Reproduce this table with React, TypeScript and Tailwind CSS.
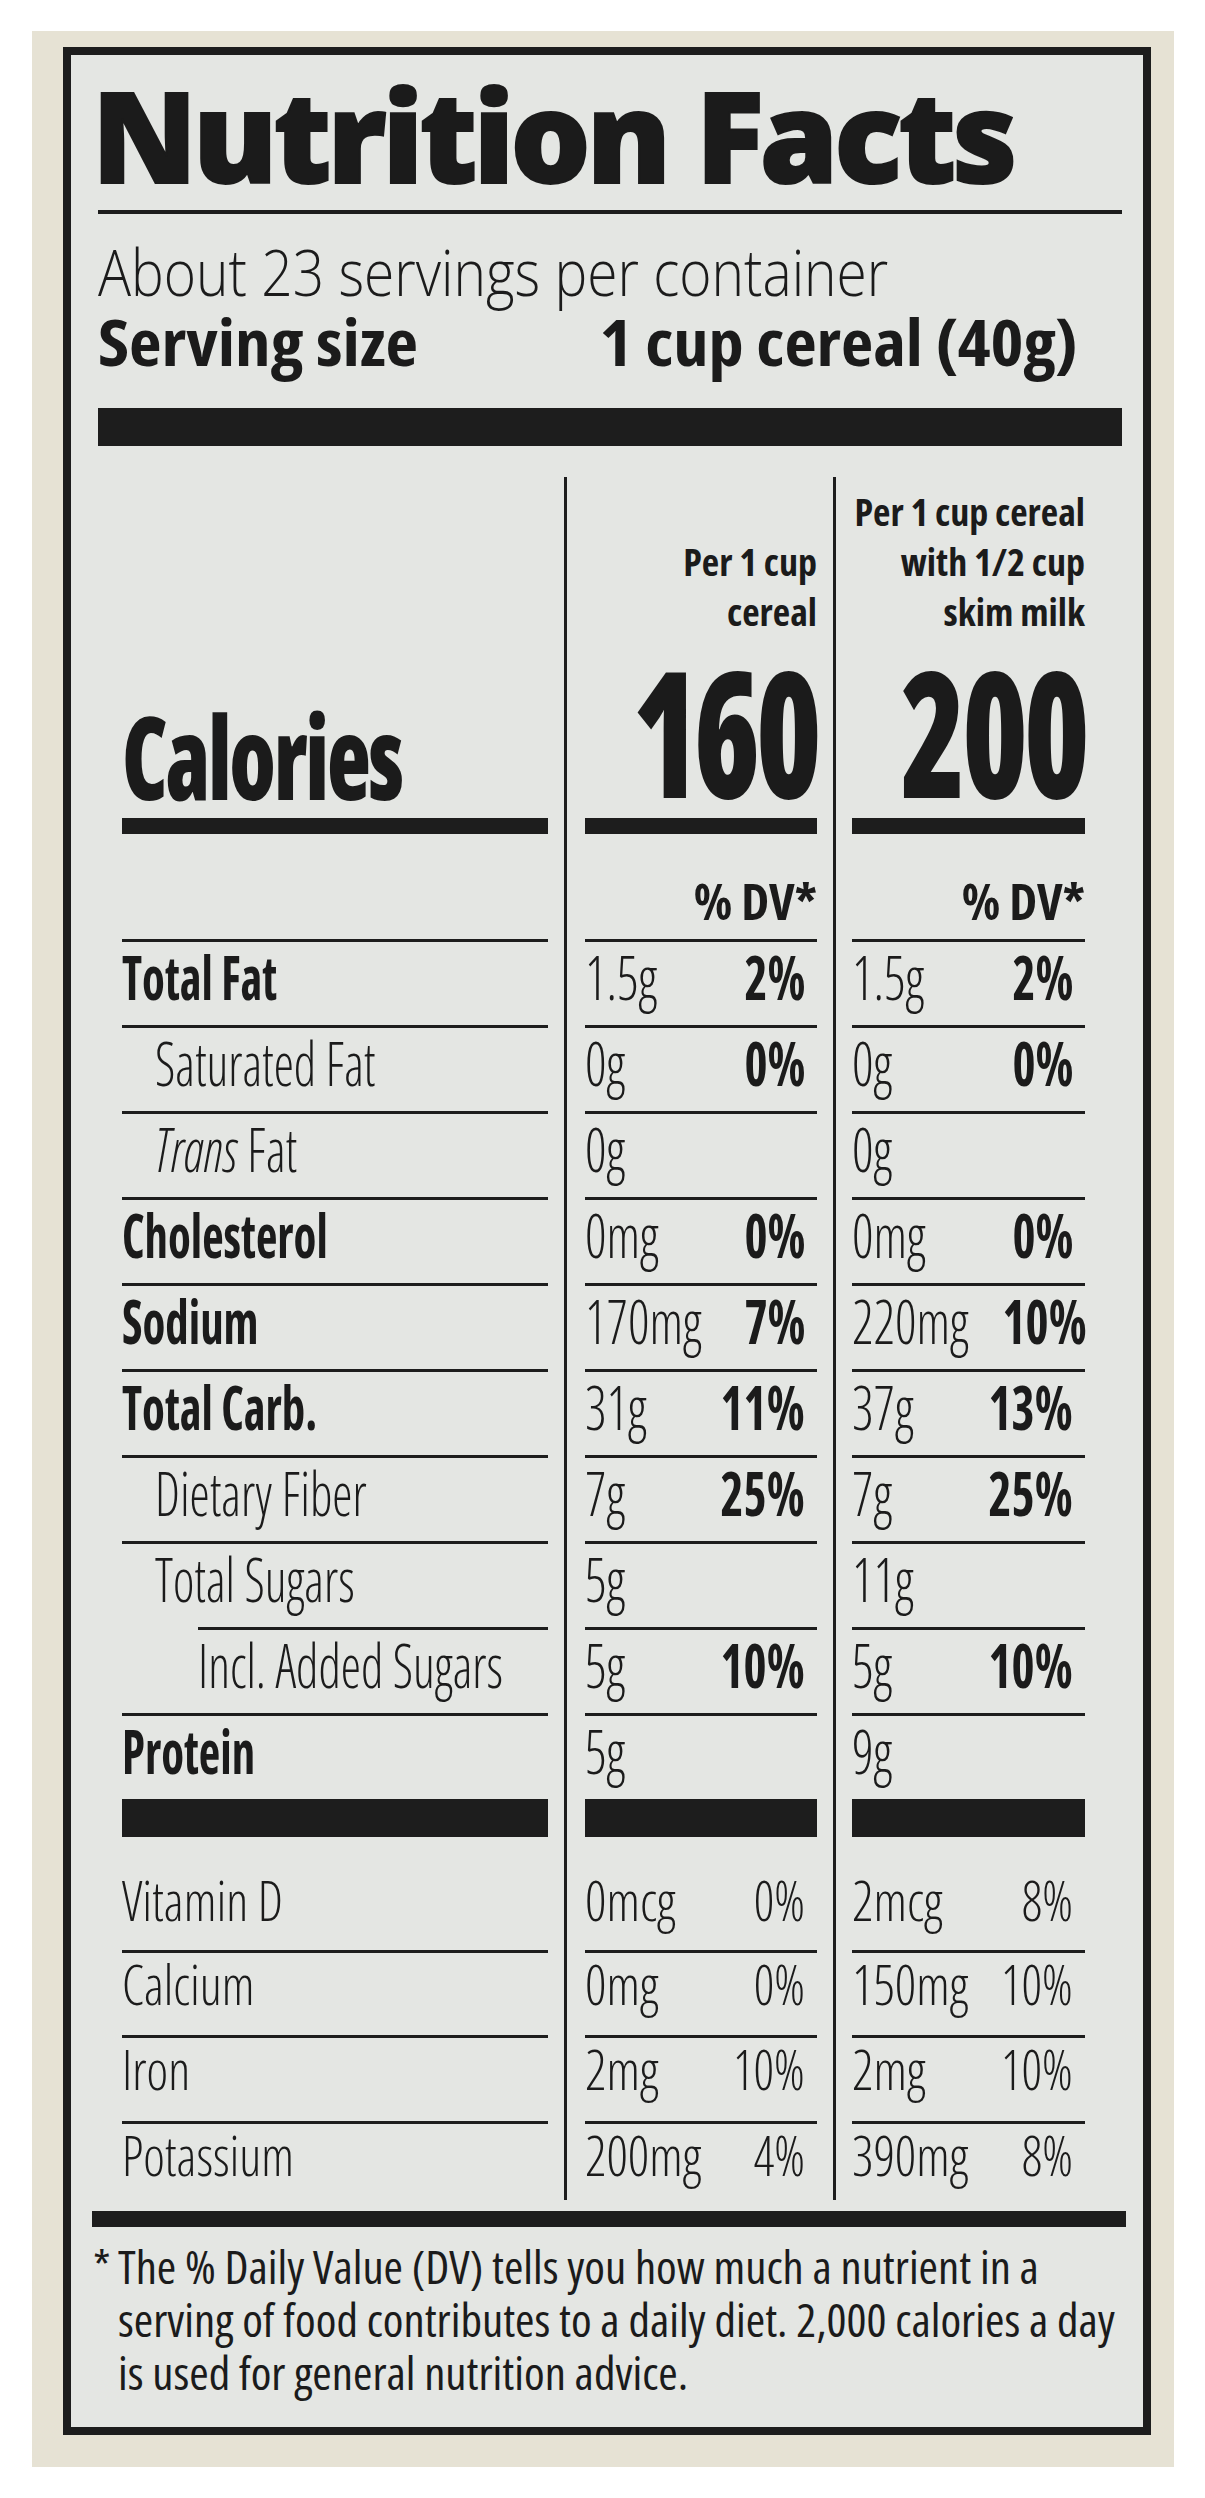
import React from 'react';

type Nutrient = {
  label: string;
  italic?: string;
  weight: 'bold' | 'light';
  indent?: 'sub' | 'subsub';
  a: string[];
  b: string[];
};

const nutrients: Nutrient[] = [
  { label: 'Total Fat', weight: 'bold', a: ['1.5g', '2%'], b: ['1.5g', '2%'] },
  { label: 'Saturated Fat', weight: 'light', indent: 'sub', a: ['0g', '0%'], b: ['0g', '0%'] },
  { label: ' Fat', italic: 'Trans', weight: 'light', indent: 'sub', a: ['0g'], b: ['0g'] },
  { label: 'Cholesterol', weight: 'bold', a: ['0mg', '0%'], b: ['0mg', '0%'] },
  { label: 'Sodium', weight: 'bold', a: ['170mg', '7%'], b: ['220mg', '10%'] },
  { label: 'Total Carb.', weight: 'bold', a: ['31g', '11%'], b: ['37g', '13%'] },
  { label: 'Dietary Fiber', weight: 'light', indent: 'sub', a: ['7g', '25%'], b: ['7g', '25%'] },
  { label: 'Total Sugars', weight: 'light', indent: 'sub', a: ['5g'], b: ['11g'] },
  { label: 'Incl. Added Sugars', weight: 'light', indent: 'subsub', a: ['5g', '10%'], b: ['5g', '10%'] },
  { label: 'Protein', weight: 'bold', a: ['5g'], b: ['9g'] },
];

const vitamins = [
  { label: 'Vitamin D', a: ['0mcg', '0%'], b: ['2mcg', '8%'], row: 'h-[113px] pt-[34px]' },
  { label: 'Calcium', a: ['0mg', '0%'], b: ['150mg', '10%'], row: 'h-[85px] border-t-[3px] pt-[2px]' },
  { label: 'Iron', a: ['2mg', '10%'], b: ['2mg', '10%'], row: 'h-[86px] border-t-[3px] pt-[2px]' },
  { label: 'Potassium', a: ['200mg', '4%'], b: ['390mg', '8%'], row: 'h-[79px] border-t-[3px] pt-[2px]' },
];

function Columns({
  left,
  mid,
  right,
  className,
}: {
  left: React.ReactNode;
  mid: React.ReactNode;
  right: React.ReactNode;
  className?: string;
}) {
  return (
    <div className={`flex ${className ?? ''}`}>
      <div className="w-[426px] shrink-0">{left}</div>
      <div className="ml-[16px] border-l-[3px] border-[#1d1d1d] pl-[18px]">
        <div className="h-full w-[232px]">{mid}</div>
      </div>
      <div className="ml-[16px] border-l-[3px] border-[#1d1d1d] pl-[16px]">
        <div className="h-full w-[233px]">{right}</div>
      </div>
    </div>
  );
}

function Amount({ values }: { values: string[] }) {
  return (
    <div className="flex h-[86px] items-start justify-between border-t-[3px] border-[#1d1d1d] pt-[5px] text-[60px] leading-none [font-stretch:75%]">
      <span className="inline-block origin-left scale-x-[0.88] whitespace-nowrap font-light">{values[0]}</span>
      {values[1] && (
        <span className="mr-[12px] inline-block origin-right scale-x-[0.82] whitespace-nowrap font-bold">{values[1]}</span>
      )}
    </div>
  );
}

function VitaminAmount({ values, row }: { values: string[]; row: string }) {
  return (
    <div className={`flex items-start justify-between border-[#1d1d1d] text-[56px] leading-none font-light [font-stretch:75%] ${row}`}>
      <span className="inline-block origin-left scale-x-[0.94] whitespace-nowrap">{values[0]}</span>
      <span className="mr-[12px] inline-block origin-right scale-x-[0.9] whitespace-nowrap">{values[1]}</span>
    </div>
  );
}

export default function App() {
  return (
    <div className="w-[1205px] bg-white pb-[32px] pl-[32px] pr-[31px] pt-[31px] font-['Open_Sans',sans-serif] text-[#1b1b1b]">
      <div className="bg-[#e6e2d4] pb-[32px] pl-[31px] pr-[23px] pt-[16px]">
        <div className="border-[8px] border-[#1d1d1d] bg-[#e4e6e3] pb-[28px] pl-[27px] pr-[21px] pt-[16px]">
          <h1 className="-ml-[6px] text-[126px] leading-none font-extrabold tracking-[-4px] [-webkit-text-stroke:2px_#1b1b1b]">
            Nutrition Facts
          </h1>
          <div className="mt-[13px] h-[4px] bg-[#1d1d1d]" />
          <p className="mt-[26px] origin-left scale-x-[0.86] whitespace-nowrap text-[64px] leading-none font-light">
            About 23 servings per container
          </p>
          <div className="mt-[6px] flex justify-between pr-[44px] text-[64px] leading-none font-bold [font-stretch:75%]">
            <span className="inline-block origin-left scale-x-[1.11] whitespace-nowrap">Serving size</span>
            <span className="inline-block origin-right scale-x-[1.1] whitespace-nowrap">1 cup cereal (40g)</span>
          </div>
          <div className="mt-[34px] h-[38px] bg-[#1d1d1d]" />

          <div className="ml-[24px] mt-[31px]">
            <Columns
              className="h-[357px]"
              left={
                <div className="flex h-full flex-col justify-end">
                  <div className="origin-left scale-x-[0.78] whitespace-nowrap text-[116px] leading-none font-extrabold tracking-[-3px] [font-stretch:75%]">
                    Calories
                  </div>
                  <div className="mt-[5px] h-[16px] bg-[#1d1d1d]" />
                </div>
              }
              mid={
                <div className="flex h-full flex-col items-end justify-end text-right">
                  <div className="mb-[6px] text-[38px] leading-[50px] font-bold [font-stretch:75%]">
                    Per 1 cup
                    <br />
                    cereal
                  </div>
                  <div className="origin-right scale-x-[0.76] text-[176px] leading-none font-extrabold tracking-[-6px] [font-stretch:75%]">
                    160
                  </div>
                  <div className="h-[16px] w-full bg-[#1d1d1d]" />
                </div>
              }
              right={
                <div className="flex h-full flex-col items-end justify-end text-right">
                  <div className="mb-[6px] text-[38px] leading-[50px] font-bold [font-stretch:75%]">
                    Per 1 cup cereal
                    <br />
                    with 1/2 cup
                    <br />
                    skim milk
                  </div>
                  <div className="origin-right scale-x-[0.76] text-[176px] leading-none font-extrabold tracking-[-6px] [font-stretch:75%]">
                    200
                  </div>
                  <div className="h-[16px] w-full bg-[#1d1d1d]" />
                </div>
              }
            />
            <Columns
              className="h-[105px]"
              left={null}
              mid={<div className="pt-[42px] text-right text-[50px] leading-none font-bold [font-stretch:75%]">% DV*</div>}
              right={<div className="pt-[42px] text-right text-[50px] leading-none font-bold [font-stretch:75%]">% DV*</div>}
            />
            {nutrients.map((n) => (
              <Columns
                key={n.label}
                left={
                  <div
                    className={`h-[86px] border-t-[3px] border-[#1d1d1d] pt-[5px] text-[60px] leading-none [font-stretch:75%] ${
                      n.indent === 'sub' ? 'pl-[33px]' : ''
                    } ${n.indent === 'subsub' ? 'ml-[76px]' : ''}`}
                  >
                    <span
                      className={`inline-block whitespace-nowrap ${
                        n.weight === 'bold' ? 'origin-left scale-x-[0.78] font-bold' : 'origin-left scale-x-[0.85] font-light'
                      }`}
                    >
                      {n.italic && <i>{n.italic}</i>}
                      {n.label}
                    </span>
                  </div>
                }
                mid={<Amount values={n.a} />}
                right={<Amount values={n.b} />}
              />
            ))}
            <Columns
              className="h-[38px]"
              left={<div className="h-full bg-[#1d1d1d]" />}
              mid={<div className="h-full bg-[#1d1d1d]" />}
              right={<div className="h-full bg-[#1d1d1d]" />}
            />
            {vitamins.map((v) => (
              <Columns
                key={v.label}
                left={
                  <div className={`border-[#1d1d1d] text-[56px] leading-none font-light [font-stretch:75%] ${v.row}`}>
                    <span className="inline-block origin-left scale-x-[0.92] whitespace-nowrap">{v.label}</span>
                  </div>
                }
                mid={<VitaminAmount values={v.a} row={v.row} />}
                right={<VitaminAmount values={v.b} row={v.row} />}
              />
            ))}
          </div>

          <div className="-ml-[6px] mt-[11px] h-[16px] w-[1034px] bg-[#1d1d1d]" />
          <div className="-ml-[5px] mt-[13px] flex text-[45px] leading-[53px] [font-stretch:75%]">
            <span className="w-[25px] shrink-0">*</span>
            <p className="origin-left scale-x-[1.045] whitespace-nowrap">
              The % Daily Value (DV) tells you how much a nutrient in a
              <br />
              serving of food contributes to a daily diet. 2,000 calories a day
              <br />
              is used for general nutrition advice.
            </p>
          </div>
        </div>
      </div>
    </div>
  );
}
